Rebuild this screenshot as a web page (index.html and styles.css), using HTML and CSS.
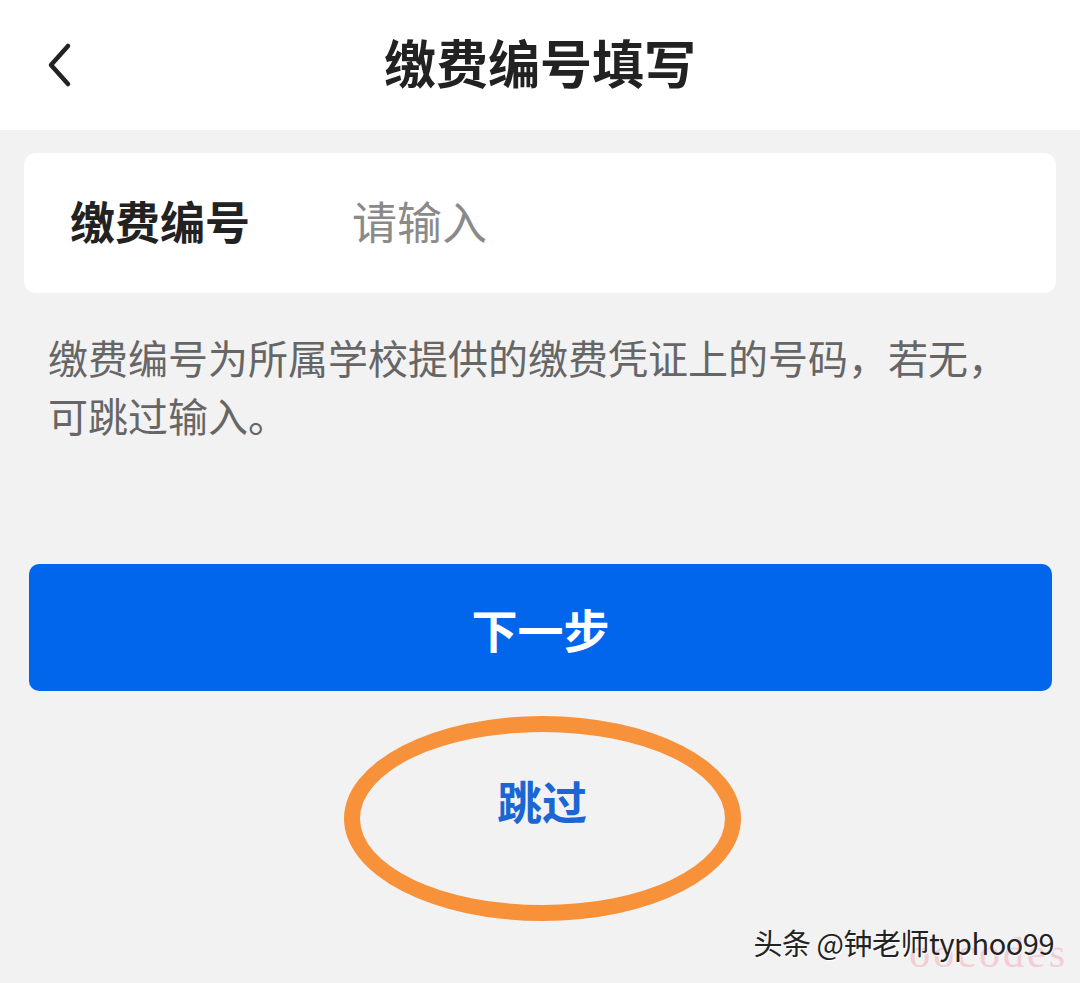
FILE: index.html
```html
<!DOCTYPE html>
<html lang="zh-CN">
<head>
  <meta charset="UTF-8" />
  <meta name="viewport" content="width=device-width, initial-scale=1.0" />
  <title>缴费编号填写</title>
  <link rel="stylesheet" href="styles.css">
</head>
<body>
  <header class="topbar">
    <div class="back">
      <svg width="30" height="46" viewBox="0 0 30 46">
        <path d="M22 4 L5 23 L22 42" fill="none" stroke="#222" stroke-width="4.5" stroke-linecap="round" stroke-linejoin="round"/>
      </svg>
    </div>
    <h1>缴费编号填写</h1>
    <div></div>
  </header>

  <main class="content">
    <div class="card">
      <span class="label">缴费编号</span>
      <span class="placeholder">请输入</span>
    </div>

    <p class="hint">缴费编号为所属学校提供的缴费凭证上的号码，若无，可跳过输入。</p>

    <button class="next">下一步</button>

    <div class="skip-wrap">
      <span class="skip">跳过</span>
    </div>
  </main>

  <div class="watermark">
    <span class="ghost">oocodes</span>
    <span class="mark">头条 @钟老师typhoo99</span>
  </div>
</body>
</html>
```

FILE: styles.css
```css
body {
  margin: 0;
  background-color: #f2f2f2;
  font-family: "Noto Sans CJK SC", "Noto Sans", sans-serif;
  width: 1080px;
  height: 983px;
  overflow: hidden;
  position: relative;
}
.topbar {
  height: 130px;
  background-color: #fff;
  display: grid;
  grid-template-columns: 1fr auto 1fr;
  align-items: center;
}
.back {
  padding-left: 46px;
  display: flex;
  align-items: center;
  height: 46px;
}
.topbar h1 {
  margin: 0;
  font-size: 52px;
  font-weight: 700;
  color: #222;
  line-height: 1;
  padding-bottom: 6px;
}
.content {
  padding: 23px 24px 0;
}
.card {
  background-color: #fff;
  border-radius: 12px;
  height: 140px;
  display: flex;
  align-items: center;
  padding-left: 46px;
  padding-bottom: 6px;
  box-sizing: border-box;
}
.label {
  font-size: 45px;
  font-weight: 700;
  color: #222;
  width: 282px;
}
.placeholder {
  font-size: 45px;
  color: #8a8a8a;
}
.hint {
  margin: 35px 24px 0;
  font-size: 40px;
  line-height: 58px;
  color: #666;
}
.next {
  display: block;
  margin: 120px 4px 0 5px;
  width: 1023px;
  height: 127px;
  border: none;
  border-radius: 10px;
  background-color: #0266ec;
  color: #fff;
  font-family: inherit;
  font-size: 46px;
  font-weight: 700;
  padding: 0;
}
.skip-wrap {
  margin: 25px auto 0;
  width: 397px;
  height: 205px;
  box-sizing: border-box;
  border: 16px solid #f7913a;
  border-radius: 50%;
  text-align: center;
  padding-top: 41px;
  position: relative;
  left: 2px;
}
.skip {
  font-size: 45px;
  line-height: 56px;
  font-weight: 700;
  color: #1a66d2;
}
.watermark {
  position: absolute;
  right: 26px;
  bottom: 0;
  width: 300px;
  height: 62px;
}
.ghost {
  position: absolute;
  right: -14px;
  top: 8px;
  font-family: "Liberation Serif", serif;
  font-size: 42px;
  letter-spacing: 3px;
  color: #f2cdd4;
  white-space: nowrap;
}
.mark {
  position: absolute;
  right: 0;
  top: 0;
  font-size: 29px;
  color: #222;
  white-space: nowrap;
  text-shadow: 1px 1px 0 #fff;
  letter-spacing: -0.5px;
}
```
